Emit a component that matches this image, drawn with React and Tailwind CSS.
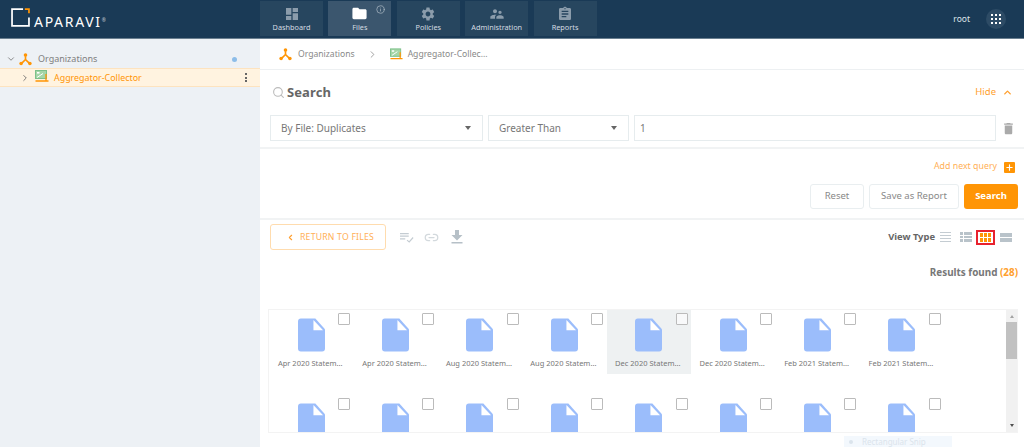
import React from 'react';
import { ChevronDown, ChevronRight, ChevronLeft, ChevronUp, Search, Link2, Info, Plus } from 'lucide-react';
import { MdDashboard, MdFolder, MdSettings, MdSupervisorAccount, MdAssignment, MdDelete } from 'react-icons/md';

const ui = "font-['Lato',sans-serif]";
const rb = "font-['Roboto',sans-serif]";

const OrgIcon = ({ className }) => (
  <svg viewBox="0 0 16 16" className={className} fill="none">
    <path d="M8 4v4M8 8l-4.5 4.5M8 8l4.5 4.5" stroke="#ff9505" strokeWidth="2" />
    <circle cx="8" cy="2.6" r="2.2" fill="#ff9505" />
    <circle cx="2.6" cy="13" r="2.2" fill="#ff9505" />
    <circle cx="13.4" cy="13" r="2.2" fill="#ff9505" />
  </svg>
);

const CollectorIcon = ({ className }) => (
  <svg viewBox="0 0 14 12" className={className} fill="none">
    <rect x="0.5" y="0.5" width="11" height="8" fill="#a5d6a7" stroke="#7cc08a" />
    <rect x="2" y="2" width="2.5" height="1.6" fill="#fff" />
    <path d="M2 7.5 L8 3.5" stroke="#fff" />
    <path d="M0.5 11h13M11 4v7" stroke="#ff9505" strokeWidth="1.3" />
  </svg>
);

const Logo = () => (
  <div className="flex items-end">
    <svg viewBox="0 0 22 22" className="w-[19px] h-[19px] shrink-0" fill="none">
      <path d="M14 1.2H1.2v19.6h19.6V11" stroke="#fff" strokeWidth="2" />
      <path d="M16 1.2h4.8V6" stroke="#ff9505" strokeWidth="2" />
    </svg>
    <span className="ml-[4px] text-white font-['Liberation_Sans',sans-serif] text-[14px] leading-[11px] tracking-[1.7px]">APARAVI</span>
    <span className="text-white text-[5px] leading-[14px] opacity-70">®</span>
  </div>
);

const navItems = [
  { label: 'Dashboard', icon: MdDashboard, size: 16 },
  { label: 'Files', icon: MdFolder, size: 17, active: true },
  { label: 'Policies', icon: MdSettings, size: 16 },
  { label: 'Administration', icon: MdSupervisorAccount, size: 16 },
  { label: 'Reports', icon: MdAssignment, size: 16 },
];

const NavTile = ({ label, icon: Icon, size, active }) => (
  <div className={`relative w-[63px] h-[35px] flex flex-col items-center justify-center ${active ? 'bg-[#3b566e]' : 'bg-[#27465f]'}`}>
    <Icon size={size} className={active ? 'text-white' : 'text-[#8b9cab]'} />
    <span className={`${rb} text-[7.3px] leading-[10px] text-[#d5dce2]`}>{label}</span>
    {active && <Info size={9} className="absolute top-[4px] right-[6px] text-[#a8b5c0]" />}
  </div>
);

const Select = ({ label, width }) => (
  <div className={`${width} shrink-0 h-[26px] border border-[#e6ecee] flex items-center justify-between pl-[10px] pr-[11px] text-[10px] text-[#777]`}>
    <span>{label}</span>
    <span className="w-0 h-0 border-x-[3.5px] border-x-transparent border-t-[4px] border-t-[#666]" />
  </div>
);

const names = ['Apr 2020 Statem...', 'Apr 2020 Statem...', 'Aug 2020 Statem...', 'Aug 2020 Statem...', 'Dec 2020 Statem...', 'Dec 2020 Statem...', 'Feb 2021 Statem...', 'Feb 2021 Statem...'];

const FileIcon = () => (
  <svg viewBox="0 0 28 34" className="w-[27px] h-[34px]">
    <path d="M3 0h15l10 11v20a3 3 0 0 1-3 3H3a3 3 0 0 1-3-3V3a3 3 0 0 1 3-3z" fill="#9bbdfb" />
    <path d="M16 1.5L26 12.2H16z" fill="#fff" />
  </svg>
);

const FileTile = ({ name, selected }) => (
  <div className={`relative h-[64px] w-[84.4px] shrink-0 flex flex-col items-center pt-[8px] ${selected ? 'bg-[#eef1f2]' : ''}`}>
    <FileIcon />
    {name && <div className={`${rb} mt-[5px] -ml-[2px] text-[7.5px] leading-[12px] text-[#777] whitespace-nowrap`}>{name}</div>}
    <span className="absolute top-[3px] left-[69px] w-[12px] h-[12px] border-[1.5px] border-[#bbb] rounded-[1px] bg-white/60" />
  </div>
);

export default function App() {
  return (
    <div className={`${ui} w-[1024px] h-[447px] overflow-hidden bg-white flex flex-col`}>
      {/* Top bar */}
      <div className="h-[39px] shrink-0 bg-[#1a3a56] border-b border-[#6a7f90] flex items-start">
        <div className="w-[260px] pl-[11px] pt-[8px]"><Logo /></div>
        <div className="flex gap-[5.4px] pt-[1px]">
          {navItems.map((n) => <NavTile key={n.label} {...n} />)}
        </div>
        <div className="flex-1 flex justify-end items-center h-[38px] pr-[18px]">
          <span className={`${rb} text-[8.5px] text-[#dfe5ea] mr-[16px]`}>root</span>
          <div className="w-[20px] h-[20px] rounded-full bg-[#2d4b65] grid grid-cols-3 gap-[1.5px] p-[5px]">
            {Array.from({ length: 9 }).map((_, i) => <span key={i} className="bg-white" />)}
          </div>
        </div>
      </div>

      <div className="flex flex-1 min-h-0">
        {/* Sidebar */}
        <div className="w-[260px] shrink-0 bg-[#edf1f5] pt-[11px]">
          <div className="h-[18px] flex items-center pl-[6px] pr-[23px]">
            <ChevronDown size={10} className="text-[#777]" />
            <OrgIcon className="w-[13px] h-[13px] ml-[3px]" />
            <span className="ml-[6px] text-[9px] text-[#808080] flex-1">Organizations</span>
            <span className="w-[5px] h-[5px] rounded-full bg-[#8dbde8]" />
          </div>
          <div className="h-[19px] flex items-center bg-[#fff3e0] border-y border-[#fde3bf] pl-[20px] pr-[13px]">
            <ChevronRight size={10} className="text-[#666]" />
            <CollectorIcon className="w-[14px] h-[12px] ml-[5px] -mt-[3px]" />
            <span className={`${rb} ml-[5px] text-[8.9px] text-[#ff9505] flex-1`}>Aggregator-Collector</span>
            <div className="flex flex-col gap-[1.5px]">
              <span className="w-[2px] h-[2px] bg-[#666]" />
              <span className="w-[2px] h-[2px] bg-[#666]" />
              <span className="w-[2px] h-[2px] bg-[#666]" />
            </div>
          </div>
        </div>

        {/* Main */}
        <div className="flex-1 min-w-0 flex flex-col">
          <div className="h-[31px] shrink-0 border-b border-[#edf0f2] flex items-center pl-[19px] text-[8.6px] text-[#888]">
            <OrgIcon className="w-[13px] h-[13px]" />
            <span className="ml-[6px]">Organizations</span>
            <ChevronRight size={11} className="ml-[12px] text-[#999]" />
            <CollectorIcon className="w-[13px] h-[12px] ml-[12px]" />
            <span className="ml-[5px]">Aggregator-Collec...</span>
          </div>

          {/* Search form */}
          <div className="h-[79px] shrink-0 border-b-2 border-[#f1f3f4] px-[10px] pt-[14px]">
            <div className="flex items-center h-[17px]">
              <Search size={13} className="text-[#bbb] ml-[2px]" />
              <span className="ml-[2px] text-[13px] font-bold text-[#666] tracking-[0.1px]">Search</span>
              <span className="ml-auto text-[9.5px] text-[#ff9f2e]">Hide</span>
              <ChevronUp size={11} strokeWidth={3} className="ml-[6px] mr-[1px] text-[#ff9f2e]" />
            </div>
            <div className="flex items-center mt-[14px]">
              <Select label="By File: Duplicates" width="w-[213px]" />
              <div className="w-[5px] shrink-0" />
              <Select label="Greater Than" width="w-[141px]" />
              <div className="w-[5px] shrink-0" />
              <div className="w-[362px] shrink-0 h-[26px] border border-[#e6ecee] flex items-center pl-[5px] text-[10px] text-[#777]">1</div>
              <MdDelete size={15} className="ml-[5px] shrink-0 text-[#aaa]" />
            </div>
          </div>

          <div className="h-[71px] shrink-0 border-b-2 border-[#f1f3f4] pr-[6px] flex flex-col items-end">
            <div className="flex items-center mt-[12px] h-[12px] pr-[3px]">
              <span className="text-[8.8px] text-[#ffb057]">Add next query</span>
              <span className="ml-[7px] w-[11px] h-[11px] bg-[#ff9505] rounded-[1px] flex items-center justify-center">
                <Plus size={9} strokeWidth={3} className="text-white" />
              </span>
            </div>
            <div className="flex mt-[11px] gap-[5px] text-[9.5px]">
              <div className="w-[54px] h-[25px] border border-[#e9eef0] rounded-[3px] flex items-center justify-center text-[#888]">Reset</div>
              <div className="w-[90px] h-[25px] border border-[#e9eef0] rounded-[3px] flex items-center justify-center text-[#888]">Save as Report</div>
              <div className="w-[54px] h-[25px] bg-[#ff9505] rounded-[3px] flex items-center justify-center text-white font-bold">Search</div>
            </div>
          </div>

          {/* Results toolbar */}
          <div className="h-[26px] shrink-0 flex items-center pl-[10px] pr-[12px] mt-[4px]">
            <div className="w-[116px] h-[26px] border border-[#ffdcae] rounded-[3px] flex items-center pl-[15px] text-[8.7px] text-[#ffb057]">
              <ChevronLeft size={9} strokeWidth={3} className="text-[#ff9f2e]" />
              <span className="ml-[5px] pt-[2px] tracking-[0.2px]">RETURN TO FILES</span>
            </div>
            <svg viewBox="0 0 16 12" className="w-[14px] h-[11px] ml-[14px]" fill="none" stroke="#c4ccd2" strokeWidth="1.3">
              <path d="M0 1.5h10M0 4.5h10M0 7.5h6M8 9l2.5 2L15 6" />
            </svg>
            <Link2 size={15} className="ml-[10px] text-[#d3d9dd]" />
            <svg viewBox="0 0 12 14" className="w-[12px] h-[14px] ml-[12px]" fill="#b6c0c7">
              <path d="M4 0h4v5h3.5L6 10.5.5 5H4zM0.5 12h11v1.6H.5z" />
            </svg>
            <span className="ml-auto text-[9.4px] font-bold text-[#666]">View Type</span>
            <div className="ml-[5px] w-[11px] flex flex-col gap-[1.5px]">
              {[0, 1, 2, 3].map((i) => <span key={i} className="h-[1.5px] bg-[#c4ccd2]" />)}
            </div>
            <div className="ml-[9px] w-[12px] h-[10px] grid grid-cols-[3px_8px] gap-[1px]">
              {[0, 1, 2, 3, 4, 5].map((i) => <span key={i} className="bg-[#b9c3ca]" />)}
            </div>
            <div className="ml-[4px] w-[19px] h-[15px] border-2 border-[#e8222e] flex items-center justify-center">
              <div className="w-[11px] h-[9px] grid grid-cols-3 gap-[1px]">
                {[0, 1, 2, 3, 4, 5].map((i) => <span key={i} className="bg-[#ff9505]" />)}
              </div>
            </div>
            <div className="ml-[5px] w-[12px] flex flex-col gap-[1px]">
              <span className="h-[4px] bg-[#b9c3ca]" />
              <span className="h-[4px] bg-[#b9c3ca]" />
            </div>
          </div>

          <div className="h-[59px] shrink-0 flex justify-end pr-[6px] pt-[15px] text-[9.9px] font-bold text-[#777] leading-[14px]">
            Results found&nbsp;<span className="text-[#ff9f2e]">(28)</span>
          </div>

          {/* File grid */}
          <div className="ml-[8px] w-[750px] h-[124px] border border-[#f3f3f3] flex overflow-hidden shrink-0">
            <div className="flex-1 min-w-0 flex flex-col gap-[20.5px] overflow-hidden">
              <div className="flex">
                {names.map((n, i) => <FileTile key={i} name={n} selected={i === 4} />)}
              </div>
              <div className="flex">
                {names.map((_, i) => <FileTile key={i} />)}
              </div>
            </div>
            <div className="w-[11px] shrink-0 bg-[#f1f1f1] flex flex-col items-center">
              <span className="mt-[5px] w-0 h-0 border-x-[2.5px] border-x-transparent border-b-[3px] border-b-[#a3a3a3]" />
              <span className="mt-[4px] w-full h-[37px] bg-[#c1c1c1]" />
              <span className="mt-auto mb-[5px] w-0 h-0 border-x-[2.5px] border-x-transparent border-t-[3px] border-t-[#505050]" />
            </div>
          </div>

          <div className="relative flex-1">
            <div className="absolute left-[584px] top-[3px] w-[108px] h-[12px] bg-[#f3f8fd] text-[8px] text-[#dbe4ec] pl-[18px] leading-[12px]">
              <span className="absolute left-[5px] top-[4px] w-[4px] h-[4px] rounded-full bg-[#dbe4ec]" />
              Rectangular Snip
            </div>
          </div>
        </div>
      </div>
    </div>
  );
}
